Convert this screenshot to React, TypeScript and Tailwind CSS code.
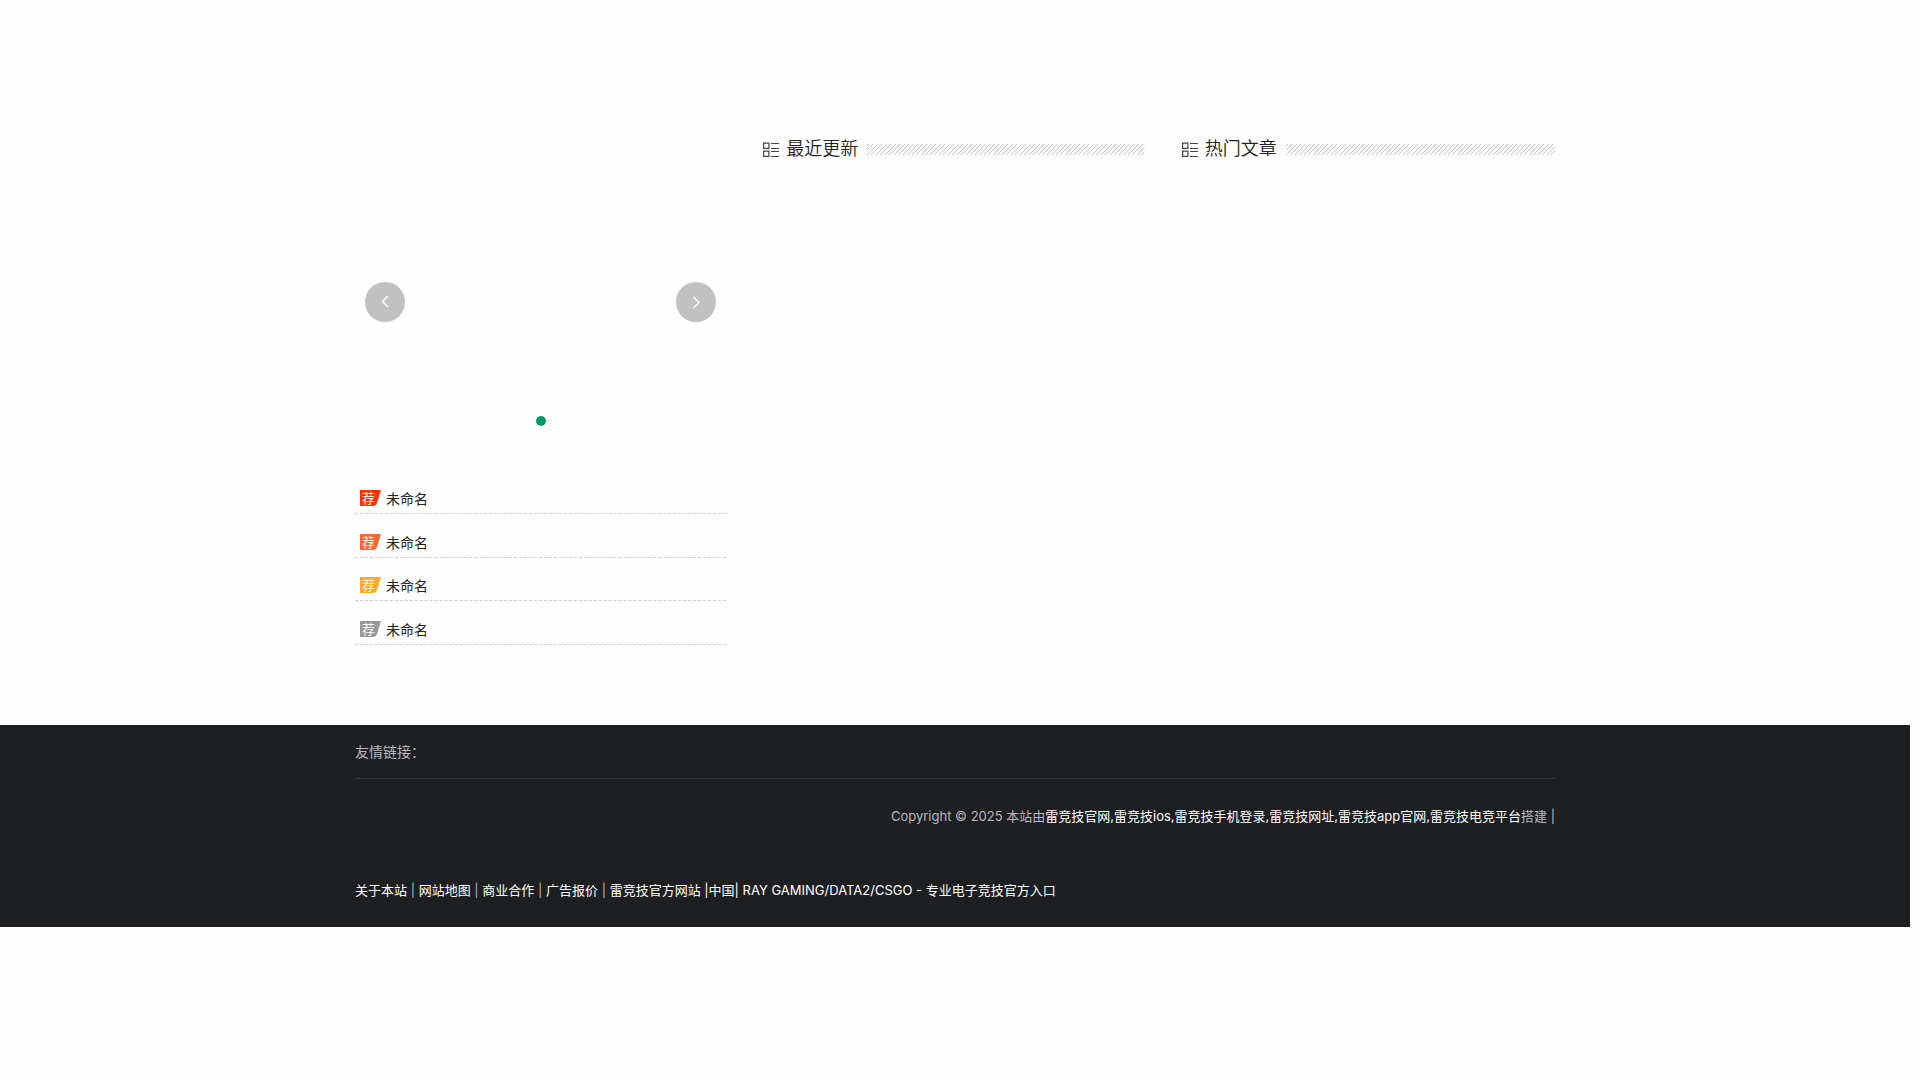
import React from "react";

const badges = ["text-[#ff3300]", "text-[#ff6633]", "text-[#ffaa22]", "text-[#999999]"];

const footerLinks = ["关于本站", "网站地图", "商业合作", "广告报价"];

// Two diagonals, four and five pixels apart, in a 9 by 9 tile.
const hatchPath = Array.from({ length: 9 }, (_, y) =>
  [1, 5].map((start) => `M${(start - y + 9) % 9} ${y}h1v1h-1z`).join(""),
).join("");

function ListIcon() {
  return (
    <svg width="16" height="17" viewBox="0 0 16 17" fill="none" stroke="#444" className="shrink-0" aria-hidden="true">
      <path strokeWidth="1.2" d="M0.6 2.1h5.3v5.3h-5.3zM0.6 10.1h5.3v5.3h-5.3z" />
      <path d="M8 2.5h8M8 7.5h8M8 10.5h8M8 15.5h8" />
    </svg>
  );
}

function Hatch({ id }: { id: string }) {
  return (
    <svg className="h-[11px] min-w-0 flex-1" aria-hidden="true">
      <defs>
        <pattern id={id} width="9" height="9" patternUnits="userSpaceOnUse">
          <path d={hatchPath} fill="#c2c2c2" shapeRendering="crispEdges" />
        </pattern>
      </defs>
      <rect width="100%" height="100%" fill={`url(#${id})`} />
    </svg>
  );
}

function Column({ title, id }: { title: string; id: string }) {
  return (
    <section>
      <div className="flex h-7 items-center">
        <ListIcon />
        <h2 className="mr-[9px] ml-[7px] text-[18px] leading-7 font-[350] text-[#222]">{title}</h2>
        <Hatch id={id} />
      </div>
    </section>
  );
}

function Carousel() {
  return (
    <div className="relative h-[302px]">
      <button aria-label="上一张" className="absolute top-[147px] left-[10px] flex size-10 items-center justify-center rounded-full bg-[#c1c1c1]">
        <svg width="8" height="14" viewBox="0 0 8 14" fill="none" stroke="#fff" strokeWidth="1.5">
          <path d="M7 1 1.5 6.5 7 12" />
        </svg>
      </button>
      <button aria-label="下一张" className="absolute top-[147px] right-[10px] flex size-10 items-center justify-center rounded-full bg-[#c1c1c1]">
        <svg width="8" height="14" viewBox="0 0 8 14" fill="none" stroke="#fff" strokeWidth="1.5">
          <path d="M1.5 2 7 7.5 1.5 13" />
        </svg>
      </button>
      <button aria-label="第 1 张" className="absolute bottom-[11px] left-1/2 size-[10px] -translate-x-1/2 rounded-full bg-[#009966]" />
    </div>
  );
}

export default function App() {
  return (
    <div className="min-h-screen bg-[#fefefe] pr-[10px] font-[Inter,'Noto_Sans_CJK_SC',sans-serif] text-[14px]">
      <main className="mx-auto grid max-w-[1200px] grid-cols-[371fr_381fr_373fr] gap-[37px] pt-[135px] pb-20">
        <div>
          <Carousel />
          <ul className="mt-[33px] grid h-[175px] grid-rows-4">
            {badges.map((color) => (
              <li key={color} className="flex items-end border-b border-dashed border-[#ccc] pb-[3px] pl-[5px]">
                <span className={`relative mb-1 flex h-4 w-[21px] ${color}`}>
                  <svg width="21" height="16" viewBox="0 0 21 16" fill="currentColor" aria-hidden="true">
                    <path d="M0 0H21L17 13Q16 16 13 16H0z" />
                  </svg>
                  <span className="absolute top-0 left-[2px] text-[13px] leading-4 font-[350] text-white">荐</span>
                </span>
                <a href="#" className="ml-[5px] leading-[22px] text-[#222]">未命名</a>
              </li>
            ))}
          </ul>
        </div>
        <Column title="最近更新" id="hatch-recent" />
        <Column title="热门文章" id="hatch-hot" />
      </main>
      <footer className="bg-[#1e1f21] text-[13px] text-[#b8b8c2]">
        <div className="mx-auto max-w-[1200px] pb-[25px]">
          <div className="border-b border-[#363738] pt-4 pb-[15px] text-[14px] leading-[22px]">友情链接：</div>
          <p className="pt-[25px] text-right leading-6">
            Copyright © 2025 本站由
            <a href="#" className="text-white">雷竞技官网,雷竞技ios,雷竞技手机登录,雷竞技网址,雷竞技app官网,雷竞技电竞平台</a>
            搭建 |
          </p>
          <p className="pt-[50px] leading-6">
            {footerLinks.map((label) => (
              <React.Fragment key={label}>
                <a href="#" className="text-white">{label}</a>
                {" | "}
              </React.Fragment>
            ))}
            <a href="#" className="text-white">雷竞技官方网站 |中国| RAY GAMING/DATA2/CSGO - 专业电子竞技官方入口</a>
          </p>
        </div>
      </footer>
    </div>
  );
}
